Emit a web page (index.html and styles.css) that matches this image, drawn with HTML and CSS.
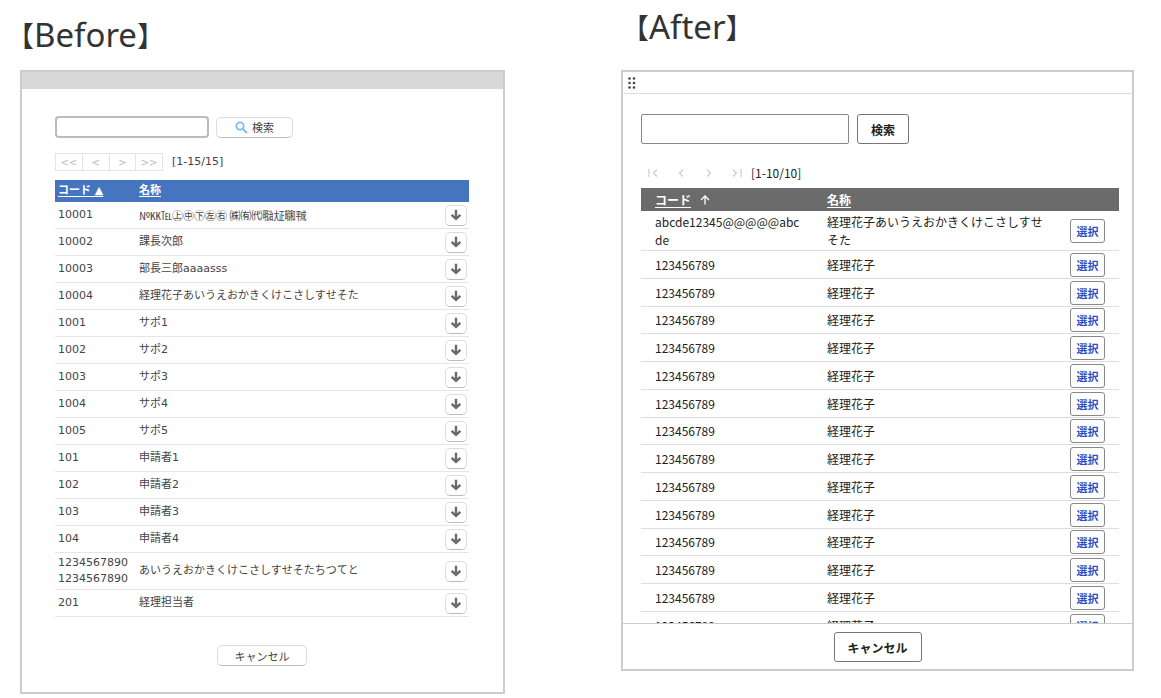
FILE: index.html
```
<!DOCTYPE html>
<html lang="ja">
<head>
    <meta charset="UTF-8">
    <title>Before / After</title>
    <meta name="viewport" content="width=device-width, initial-scale=1.0">
    <link rel="stylesheet" href="styles.css">
</head>
<body>
    <svg class="sprite" aria-hidden="true">
        <symbol id="down" viewBox="0 0 12 12">
            <path d="M6 .8V9.800M1.600 5.800L6 9.800l4.400-4" fill="none" stroke="#6a6a6a" stroke-width="2.400"/>
        </symbol>
    </svg>

    <main class="compare">
        <section class="before">
            <h2 class="title"><span>【</span>Before<span>】</span></h2>
            <div class="panel">
                <div class="titlebar"></div>
                <div class="content">
                    <form class="search">
                        <input type="text" aria-label="検索キーワード">
                        <button type="button"><svg width="13" height="13" viewBox="0 0 13 13"><circle cx="5" cy="5" r="3.700" fill="none" stroke="#7cbcf0" stroke-width="1.800"/><path d="M8 8l4 4" stroke="#7cbcf0" stroke-width="2.200"/></svg>検索</button>
                    </form>
                    <div class="pager">
                        <div class="pages">
                            <button type="button">&lt;&lt;</button>
                            <button type="button">&lt;</button>
                            <button type="button">&gt;</button>
                            <button type="button">&gt;&gt;</button>
                        </div>
                        <span>[1-15/15]</span>
                    </div>
                    <table>
                        <thead>
                            <tr><th class="code"><a href="#">コード ▲</a></th><th><a href="#">名称</a></th><th class="action"></th></tr>
                        </thead>
                        <tbody>
                            <tr><td>10001</td><td class="symbols">№㏍℡㊤㊥㊦㊧㊨ ㈱㈲㈹㍾㍽㍼㍻</td><td><button type="button" aria-label="選択"><svg><use href="#down"/></svg></button></td></tr>
                            <tr><td>10002</td><td>課長次郎</td><td><button type="button" aria-label="選択"><svg><use href="#down"/></svg></button></td></tr>
                            <tr><td>10003</td><td>部長三郎aaaasss</td><td><button type="button" aria-label="選択"><svg><use href="#down"/></svg></button></td></tr>
                            <tr><td>10004</td><td>経理花子あいうえおかきくけこさしすせそた</td><td><button type="button" aria-label="選択"><svg><use href="#down"/></svg></button></td></tr>
                            <tr><td>1001</td><td>サポ1</td><td><button type="button" aria-label="選択"><svg><use href="#down"/></svg></button></td></tr>
                            <tr><td>1002</td><td>サポ2</td><td><button type="button" aria-label="選択"><svg><use href="#down"/></svg></button></td></tr>
                            <tr><td>1003</td><td>サポ3</td><td><button type="button" aria-label="選択"><svg><use href="#down"/></svg></button></td></tr>
                            <tr><td>1004</td><td>サポ4</td><td><button type="button" aria-label="選択"><svg><use href="#down"/></svg></button></td></tr>
                            <tr><td>1005</td><td>サポ5</td><td><button type="button" aria-label="選択"><svg><use href="#down"/></svg></button></td></tr>
                            <tr><td>101</td><td>申請者1</td><td><button type="button" aria-label="選択"><svg><use href="#down"/></svg></button></td></tr>
                            <tr><td>102</td><td>申請者2</td><td><button type="button" aria-label="選択"><svg><use href="#down"/></svg></button></td></tr>
                            <tr><td>103</td><td>申請者3</td><td><button type="button" aria-label="選択"><svg><use href="#down"/></svg></button></td></tr>
                            <tr><td>104</td><td>申請者4</td><td><button type="button" aria-label="選択"><svg><use href="#down"/></svg></button></td></tr>
                            <tr><td>12345678901234567890</td><td>あいうえおかきくけこさしすせそたちつてと</td><td><button type="button" aria-label="選択"><svg><use href="#down"/></svg></button></td></tr>
                            <tr><td>201</td><td>経理担当者</td><td><button type="button" aria-label="選択"><svg><use href="#down"/></svg></button></td></tr>
                        </tbody>
                    </table>
                    <div class="footer"><button type="button">キャンセル</button></div>
                </div>
            </div>
        </section>

        <section class="after">
            <h2 class="title"><span>【</span>After<span>】</span></h2>
            <div class="panel">
                <div class="titlebar">
                    <svg width="8" height="12" viewBox="0 0 8 12" fill="#444"><circle cx="1.500" cy="1.500" r="1.300"/><circle cx="6" cy="1.500" r="1.300"/><circle cx="1.500" cy="6" r="1.300"/><circle cx="6" cy="6" r="1.300"/><circle cx="1.500" cy="10.500" r="1.300"/><circle cx="6" cy="10.500" r="1.300"/></svg>
                </div>
                <div class="content">
                    <form class="search">
                        <input type="text" aria-label="検索キーワード">
                        <button type="button">検索</button>
                    </form>
                    <div class="pager">
                        <button type="button" aria-label="最初"><svg viewBox="0 0 10 10"><path d="M1 1v8M9 1.500L5.500 5 9 8.500"/></svg></button>
                        <button type="button" aria-label="前へ"><svg viewBox="0 0 10 10"><path d="M7 1.500L3.500 5 7 8.500"/></svg></button>
                        <button type="button" aria-label="次へ"><svg viewBox="0 0 10 10"><path d="M3 1.500L6.500 5 3 8.500"/></svg></button>
                        <button type="button" aria-label="最後"><svg viewBox="0 0 10 10"><path d="M9 1v8M1 1.500L4.500 5 1 8.500"/></svg></button>
                        <span>[1-10/10]</span>
                    </div>
                    <table>
                        <thead>
                            <tr><th class="code"><a href="#">コード</a><svg width="10" height="10" viewBox="0 0 10 10"><path d="M5 9.500V1M1 5l4-4 4 4" fill="none" stroke="#fff" stroke-width="1.300"/></svg></th><th><a href="#">名称</a></th><th class="action"></th></tr>
                        </thead>
                        <tbody>
                            <tr><td>abcde12345@@@@@abcde</td><td>経理花子あいうえおかきくけこさしすせそた</td><td><button type="button">選択</button></td></tr>
                            <tr><td>123456789</td><td>経理花子</td><td><button type="button">選択</button></td></tr>
                            <tr><td>123456789</td><td>経理花子</td><td><button type="button">選択</button></td></tr>
                            <tr><td>123456789</td><td>経理花子</td><td><button type="button">選択</button></td></tr>
                            <tr><td>123456789</td><td>経理花子</td><td><button type="button">選択</button></td></tr>
                            <tr><td>123456789</td><td>経理花子</td><td><button type="button">選択</button></td></tr>
                            <tr><td>123456789</td><td>経理花子</td><td><button type="button">選択</button></td></tr>
                            <tr><td>123456789</td><td>経理花子</td><td><button type="button">選択</button></td></tr>
                            <tr><td>123456789</td><td>経理花子</td><td><button type="button">選択</button></td></tr>
                            <tr><td>123456789</td><td>経理花子</td><td><button type="button">選択</button></td></tr>
                            <tr><td>123456789</td><td>経理花子</td><td><button type="button">選択</button></td></tr>
                            <tr><td>123456789</td><td>経理花子</td><td><button type="button">選択</button></td></tr>
                            <tr><td>123456789</td><td>経理花子</td><td><button type="button">選択</button></td></tr>
                            <tr><td>123456789</td><td>経理花子</td><td><button type="button">選択</button></td></tr>
                            <tr><td>123456789</td><td>経理花子</td><td><button type="button">選択</button></td></tr>
                        </tbody>
                    </table>
                </div>
                <div class="footer"><button type="button">キャンセル</button></div>
            </div>
        </section>
    </main>
</body>
</html>
```
FILE: styles.css
```
* {
    box-sizing: border-box;
}
body {
    margin: 0;
    background: #fff;
    color: #333;
}
button, input {
    font-family: inherit;
    font-size: inherit;
    color: inherit;
    margin: 0;
    padding: 0;
    background: #fff;
}
button {
    cursor: pointer;
}
svg {
    display: block;
}
.sprite {
    position: absolute;
    width: 0;
    height: 0;
}
.compare {
    display: grid;
    grid-template-columns: 485fr 513fr;
    column-gap: 116px;
    align-items: start;
    padding: 0 27px 0 20px;
}
.title {
    margin: 0 0 0 -14px;
    height: 70px;
    line-height: 70px;
    font-family: "Noto Sans", "Noto Sans CJK JP", sans-serif;
    font-size: 33px;
    font-weight: 400;
    white-space: nowrap;
}
.title span {
    font-family: "Noto Sans CJK JP", sans-serif;
    font-size: 28px;
    line-height: 1;
}
.after .title {
    margin-left: 0;
    line-height: 54px;
}
.panel {
    border: 2px solid #ccc;
}
table {
    width: 100%;
    border-collapse: separate;
    border-spacing: 0;
    table-layout: fixed;
}
th {
    text-align: left;
    color: #fff;
    padding: 0;
}
th a {
    color: inherit;
    text-underline-offset: 2px;
}
td {
    padding: 0;
    word-break: break-all;
    vertical-align: middle;
}

/* before */
.before {
    font-family: "DejaVu Sans", "Noto Sans CJK JP", sans-serif;
    font-size: 11px;
    line-height: 16px;
}
.before .titlebar {
    height: 17px;
    background: #d8d8d8;
}
.before .content {
    padding: 27px 34px 26px 33px;
    color: #444;
}
.before .search {
    display: flex;
    align-items: center;
    gap: 7px;
    margin-bottom: 15px;
}
.before .search input {
    width: 154px;
    height: 22px;
    border: 2px solid #bbb;
    border-radius: 4px;
}
.before .search button, .before .footer button {
    display: flex;
    align-items: center;
    justify-content: center;
    gap: 4px;
    height: 21px;
    border: 1px solid #ddd;
    border-bottom-color: #bbb;
    border-radius: 5px;
}
.before .search button {
    width: 77px;
}
.before .pager {
    display: flex;
    align-items: center;
    gap: 9px;
    margin-bottom: 9px;
}
.pages {
    display: flex;
    width: 108px;
    height: 18px;
    border: 1px solid #e4e4e4;
}
.pages button {
    flex: 1;
    border: 0;
    color: #bbb;
    font-size: 10px;
}
.pages button + button {
    border-left: 1px solid #e4e4e4;
}
.before th {
    height: 22px;
    padding-left: 3px;
    background: #4575bf;
}
.before th a {
    font-weight: 700;
}
.before .code {
    width: 81px;
}
.before .action {
    width: 27px;
}
.before td {
    height: 27px;
    padding: 2px 3px;
    border-bottom: 1px solid #e6e6e6;
}
.before .symbols {
    font-family: "Noto Sans CJK JP", sans-serif;
}
.before td button {
    display: flex;
    align-items: center;
    justify-content: center;
    width: 22px;
    height: 21px;
    border: 1px solid #ddd;
    border-bottom-color: #bbb;
    border-radius: 5px;
}
.before td svg {
    width: 12px;
    height: 12px;
}
.before .footer {
    display: flex;
    justify-content: center;
    margin-top: 28px;
}
.before .footer button {
    width: 90px;
}

/* after */
.after {
    font-family: "Noto Sans CJK JP", sans-serif;
    font-size: 12px;
    line-height: 18px;
    color: #222;
}
.after .title {
    color: #333;
}
.after .titlebar {
    display: flex;
    align-items: center;
    height: 22px;
    padding-left: 5px;
    border-bottom: 1px solid #ddd;
}
.after .content {
    height: 529px;
    overflow: hidden;
    padding: 20px 13px 0 18px;
}
.after .search {
    display: flex;
    gap: 8px;
    margin-bottom: 19px;
}
.after input {
    width: 208px;
    height: 30px;
    border: 1px solid #888;
    border-radius: 2px;
}
.after .search button, .after .footer button {
    width: 52px;
    height: 30px;
    border: 1px solid #777;
    border-radius: 3px;
    font-weight: 700;
}
.after .pager {
    display: flex;
    align-items: center;
    height: 20px;
    margin: 0 0 5px -2px;
}
.after .pager button {
    display: flex;
    justify-content: center;
    width: 28px;
    border: 0;
}
.after .pager svg {
    width: 10px;
    height: 10px;
    fill: none;
    stroke: #ccc;
    stroke-width: 1.2;
}
.after th {
    height: 23px;
    padding-left: 14px;
    background: #6b6b6b;
}
.after th svg {
    display: inline-block;
    margin-left: 9px;
}
.after .code {
    width: 172px;
}
.after .action {
    width: 63px;
}
.after td {
    height: 28px;
    padding: 1px 10px 1px 14px;
    border-bottom: 1px solid #ddd;
}
.after tr:nth-child(4n) td {
    height: 27px;
}
.after tr:first-child td {
    height: 40px;
}
.after td button {
    display: block;
    width: 35px;
    height: 24px;
    border: 1px solid #888;
    border-radius: 3px;
    color: #2c4fc4;
    font-size: 11px;
    font-weight: 700;
}
.after .footer {
    display: flex;
    justify-content: center;
    padding: 8px 0 7px;
    border-top: 1px solid #ccc;
}
.after .footer button {
    width: 88px;
}
```
